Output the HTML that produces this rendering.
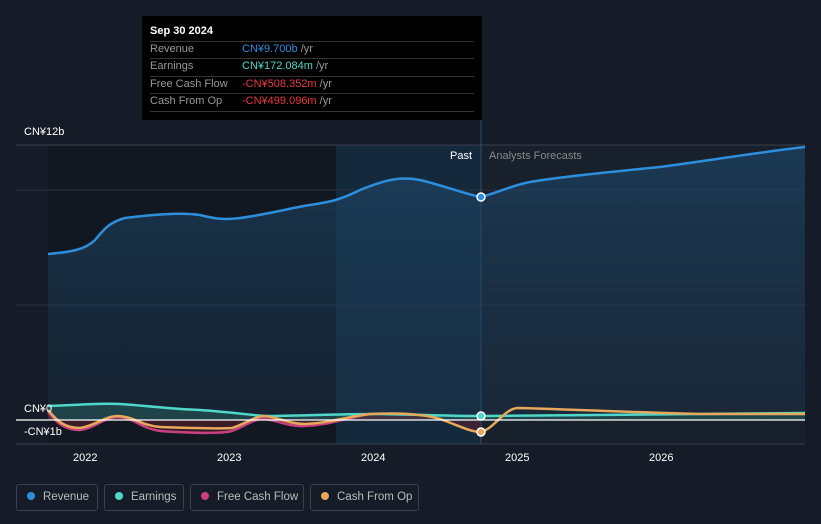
<!DOCTYPE html>
<html><head><meta charset="utf-8"><style>
html,body{margin:0;width:821px;height:524px;overflow:hidden}
body{background:#161c27;font-family:"Liberation Sans",sans-serif;position:relative}
.t{position:absolute;font-size:11px;color:#fff;white-space:nowrap}
.tip{position:absolute;left:142px;top:16px;width:340px;height:104px;background:#000}
.tip div{position:absolute;left:8px;font-size:11px;white-space:nowrap}
.ln{position:absolute;left:8px;width:324px;height:1px;background:#333}
.lg{position:absolute;top:484px;height:27px;border:1px solid #3a3f4a;border-radius:3px;font-size:11.5px;color:#bbb;line-height:25px;box-sizing:border-box;white-space:nowrap}
.lg i{display:inline-block;width:8px;height:8px;border-radius:50%;margin:0 8px 0 10px;vertical-align:0}
</style></head><body>
<svg width="821" height="524" style="position:absolute;left:0;top:0">
<defs><linearGradient id="g" x1="0" y1="0" x2="0" y2="1"><stop offset="0" stop-color="#1d4a6e" stop-opacity=".6"/><stop offset="1" stop-color="#1d3a55" stop-opacity=".3"/></linearGradient></defs>
<rect x="48" y="145" width="433" height="299" fill="#121821"/>
<rect x="481" y="145" width="324" height="299" fill="#18202c"/>
<rect x="336" y="145" width="145" height="299" fill="#173048" opacity=".7"/>
<line x1="16" y1="145" x2="805" y2="145" stroke="#3a404b"/>
<line x1="16" y1="190" x2="805" y2="190" stroke="#2a313c"/>
<line x1="16" y1="305" x2="805" y2="305" stroke="#2a313c"/>
<line x1="481" y1="120" x2="481" y2="444" stroke="#2a4e70"/>
<path d="M48,254 C70,252 85,250 95,240 C105,228 110,222 125,218 C150,215 180,212 200,215 C215,219 225,220 240,218 C270,214 290,208 310,205 C330,202 340,200 360,190 C385,180 400,176 420,180 C445,186 465,194 481,197 C500,192 510,186 530,182 C560,177 600,173 660,167 C720,159 760,152 805,147 L805,420 L48,420Z" fill="url(#g)"/>
<path d="M48,254 C70,252 85,250 95,240 C105,228 110,222 125,218 C150,215 180,212 200,215 C215,219 225,220 240,218 C270,214 290,208 310,205 C330,202 340,200 360,190 C385,180 400,176 420,180 C445,186 465,194 481,197 C500,192 510,186 530,182 C560,177 600,173 660,167 C720,159 760,152 805,147" fill="none" stroke="#2d8fdc" stroke-width="2.5"/>
<path d="M48,406 C80,405 100,403 120,404 C150,406 170,409 200,410 C230,412 250,415 265,416 C300,416 330,414 380,414 C430,415 460,416 481,416 C530,415 600,414 805,413 L805,420 L48,420Z" fill="#2a6a66" opacity=".45"/>
<path d="M48,412 C55,420 62,430 80,430 C95,428 105,417 118,417 C135,418 140,428 160,431 C190,433 220,434 232,431 C245,426 255,418 265,419 C280,421 290,427 305,426 C330,425 345,418 370,414 C395,413 420,414 440,420 C460,427 470,432 481,432 L481,420 L48,420Z" fill="#5a2030" opacity=".55"/>
<path d="M48,406 C80,405 100,403 120,404 C150,406 170,409 200,410 C230,412 250,415 265,416 C300,416 330,414 380,414 C430,415 460,416 481,416 C530,415 600,414 805,413" fill="none" stroke="#4fd8c8" stroke-width="2.5"/>
<path d="M48,412 C55,420 62,430 80,430 C95,428 105,417 118,417 C135,418 140,428 160,431 C190,433 220,434 232,431 C245,426 255,418 265,419 C280,421 290,427 305,426 C330,425 345,418 370,414" fill="none" stroke="#c8407f" stroke-width="2.5"/>
<path d="M48,410 C55,418 62,428 80,428 C95,426 105,416 118,416 C135,417 140,425 160,427 C190,428 220,429 232,428 C245,424 255,416 265,416 C280,418 290,424 305,424 C330,423 345,417 370,414 C395,413 420,413 440,419 C460,426 470,432 481,432 C495,428 505,408 518,408 C560,409 620,412 700,414 C740,414 780,414 805,414" fill="none" stroke="#e6a85a" stroke-width="2.5"/>
<line x1="16" y1="420" x2="805" y2="420" stroke="#fff" stroke-width="1.2"/>
<line x1="16" y1="444" x2="805" y2="444" stroke="#3a404b"/>
<circle cx="481" cy="197" r="4" fill="#2d8fdc" stroke="#fff" stroke-width="1.5"/>
<circle cx="481" cy="416" r="4" fill="#4fd8c8" stroke="#fff" stroke-width="1.5"/>
<circle cx="481" cy="432" r="4" fill="#e6a85a" stroke="#fff" stroke-width="1.5"/>
</svg>
<div class="t" style="left:24px;top:126px">CN¥12b</div>
<div class="t" style="left:24px;top:403px">CN¥0</div>
<div class="t" style="left:24px;top:426px">-CN¥1b</div>
<div class="t" style="left:450px;top:150px">Past</div>
<div class="t" style="left:489px;top:150px;color:#888">Analysts Forecasts</div>
<div class="t" style="left:73px;top:452px">2022</div>
<div class="t" style="left:217px;top:452px">2023</div>
<div class="t" style="left:361px;top:452px">2024</div>
<div class="t" style="left:505px;top:452px">2025</div>
<div class="t" style="left:649px;top:452px">2026</div>
<div class="tip">
<div style="top:9px;color:#fff;font-weight:bold">Sep 30 2024</div>
<div class="ln" style="top:25px"></div>
<div style="top:27px;color:#999">Revenue</div><div style="top:27px;left:100px;color:#2d8fdc">CN¥9.700b <span style="color:#999">/yr</span></div>
<div class="ln" style="top:42px"></div>
<div style="top:44px;color:#999">Earnings</div><div style="top:44px;left:100px;color:#4fd8c8">CN¥172.084m <span style="color:#999">/yr</span></div>
<div class="ln" style="top:60px"></div>
<div style="top:62px;color:#999">Free Cash Flow</div><div style="top:62px;left:100px;color:#e8383d">-CN¥508.352m <span style="color:#999">/yr</span></div>
<div class="ln" style="top:77px"></div>
<div style="top:79px;color:#999">Cash From Op</div><div style="top:79px;left:100px;color:#e8383d">-CN¥499.096m <span style="color:#999">/yr</span></div>
<div class="ln" style="top:95px"></div>
</div>
<div class="lg" style="left:16px;width:82px"><i style="background:#2d8fdc"></i>Revenue</div>
<div class="lg" style="left:104px;width:80px"><i style="background:#4fd8c8"></i>Earnings</div>
<div class="lg" style="left:190px;width:114px"><i style="background:#c8407f"></i>Free Cash Flow</div>
<div class="lg" style="left:310px;width:109px"><i style="background:#e6a85a"></i>Cash From Op</div>
</body></html>
